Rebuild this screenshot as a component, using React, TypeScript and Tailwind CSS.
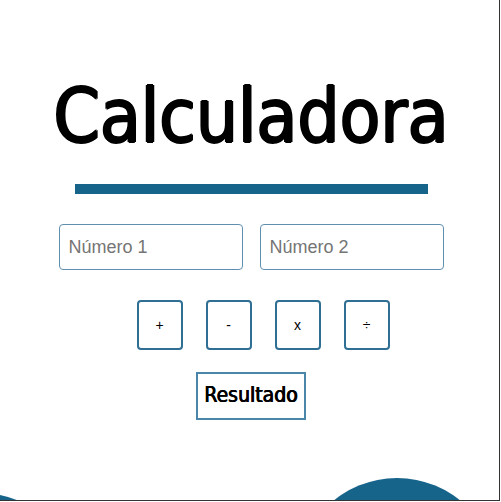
import { useState } from "react";

const ops = ["+", "-", "x", "÷"];

export default function App() {
  const [a, setA] = useState("");
  const [b, setB] = useState("");
  return (
    <div className="relative h-[501px] w-[500px] overflow-hidden border-r border-b border-[#333] bg-white">
      <div className="flex flex-col items-center pl-[3px]">
        <h1 className="mt-[72px] text-[74px] leading-[88px] text-black font-stretch-condensed [text-shadow:1.2px_0_0_#000,-1.2px_0_0_#000,0_0.8px_0_#000,0_-0.6px_0_#000] [font-family:'DejaVu_Sans',sans-serif]">
          Calculadora
        </h1>
        <div className="mt-[24px] h-[10px] w-[353px] bg-[#17648b]" />
        <div className="mt-[30px] flex gap-[17px] [font-family:'Liberation_Sans',Arial,sans-serif]">
          <input
            value={a}
            onChange={(e) => setA(e.target.value)}
            placeholder="Número 1"
            className="h-[46px] w-[184px] rounded-[4px] border border-[#5f8fae] px-[9px] text-[18px] placeholder:text-[#757575] outline-none"
          />
          <input
            value={b}
            onChange={(e) => setB(e.target.value)}
            placeholder="Número 2"
            className="h-[46px] w-[184px] rounded-[4px] border border-[#5f8fae] px-[9px] text-[18px] placeholder:text-[#757575] outline-none"
          />
        </div>
        <div className="mt-[30px] ml-[24px] flex gap-[23px] [font-family:'Liberation_Sans',Arial,sans-serif]">
          {ops.map((op) => (
            <button
              key={op}
              className="flex h-[50px] w-[46px] items-center justify-center rounded-[4px] border-2 border-[#2f6f94] text-[14px] text-black"
            >
              {op}
            </button>
          ))}
        </div>
        <button className="mt-[22px] h-[48px] w-[110px] border-2 border-[#4a86a8] text-[21px] text-black font-stretch-condensed [text-shadow:0.5px_0_0_#000,-0.3px_0_0_#000] [font-family:'DejaVu_Sans',sans-serif]">
          Resultado
        </button>
      </div>
      <div className="absolute left-[297px] top-[478px] h-[200px] w-[200px] rounded-full bg-[#17648b]" />
      <div className="absolute left-[-120px] top-[493px] h-[200px] w-[200px] rounded-full bg-[#17648b]" />
    </div>
  );
}
